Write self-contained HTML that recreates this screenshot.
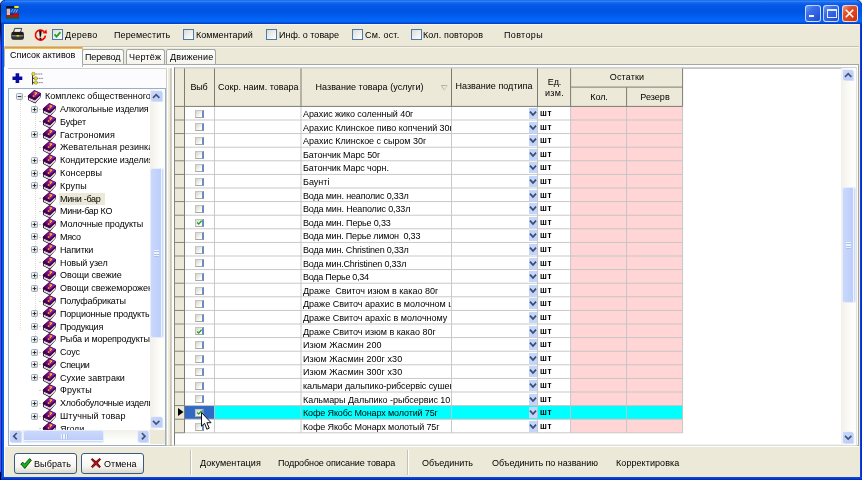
<!DOCTYPE html>
<html><head><meta charset="utf-8"><title>Список активов</title>
<style>
html,body{margin:0;padding:0;}
body{width:862px;height:480px;overflow:hidden;background:#ece9d8;position:relative;font-family:"Liberation Sans",sans-serif;font-size:9px;color:#000;}
span{will-change:transform;}
div,span{position:absolute;box-sizing:border-box;white-space:pre;}
svg{position:absolute;overflow:visible;}
.t{line-height:12px;height:12px;}
.cb{width:11px;height:11px;border:1.1px solid #4a7aad;background:linear-gradient(135deg,#dcdcd7,#fff);}
.tab{top:48.6px;height:15.5px;border:1px solid #a0a8a8;border-bottom:none;border-radius:2.5px 2.5px 0 0;background:linear-gradient(#fefefd,#f4f3ec);}
.gc{width:8.8px;height:8px;left:195.1px;background:linear-gradient(135deg,#d4d4cc,#fff 80%);border-right:2px solid #6c8cc0;border-bottom:1px solid #a8a8a0;border-left:1px solid #c4c4bc;border-top:1px solid #c4c4bc;}
.dd{left:529px;width:8px;height:11px;background:#c3d5fb;}
.btn{top:453px;height:20.6px;border:1.2px solid #3a5a84;border-radius:3px;background:linear-gradient(#fff,#f6f5f0 65%,#dcdacc);}
</style></head><body>
<svg width="0" height="0" style="left:0;top:0">
<defs>
<linearGradient id="xg" x1="0" y1="0" x2="1" y2="1"><stop offset="0" stop-color="#fff"/><stop offset="1" stop-color="#d4d0c4"/></linearGradient>
<symbol id="bk" viewBox="0 0 13 13.5">
<linearGradient id="bg1" x1="0" y1="0.6" x2="1" y2="0.3"><stop offset="0" stop-color="#3c0048"/><stop offset="0.4" stop-color="#86088f"/><stop offset="1" stop-color="#ac20bc"/></linearGradient>
<path d="M6.3 0 L12.8 3.1 L13 6.8 L7.1 13.4 L0.2 10.1 L0 5.6 Z" fill="#1c0024"/>
<path d="M0.9 7.7 L6.9 10.5 L12.4 5.2 L12.5 7 L7 12.4 L1 9.7 Z" fill="#fff"/>
<path d="M1 8.7 L7 11.5 L12.5 6.1" stroke="#888" stroke-width=".45" fill="none"/>
<path d="M0.4 6 L6.8 8.9 L12.3 3.8 L12.3 4.8 L6.8 10 L0.5 7.2Z" fill="#5c0a6a"/>
<path d="M0.5 5.6 L6.4 0.6 L12.2 3.3 L6.8 8.3 Z" fill="url(#bg1)"/>
<path d="M5.9 2.9 Q7.3 1.6 9 2.6 Q9.8 3.6 7.8 4.8 L7.2 5.4 L6.2 4.9 L7.6 3.7 Q7.5 3 6.8 3.5 Z" fill="#ffd800"/>
<circle cx="5.6" cy="6" r="0.85" fill="#ffd800"/>
</symbol>
<symbol id="ck" viewBox="0 0 9 9"><path d="M1.6 4.4 L3.6 6.6 L7.4 2.2" fill="none" stroke="#21a121" stroke-width="1.8"/></symbol>
<symbol id="chv" viewBox="0 0 8 11"><path d="M1 3.7 L4 7 L7 3.7" fill="none" stroke="#3a4c74" stroke-width="1.8"/></symbol>
</defs></svg>

<div style="left:0;top:0;width:862px;height:23.7px;background:linear-gradient(#1c5fe0 0,#3088fa 1.2px,#1468f2 2.6px,#0558e6 5px,#0054e3 12px,#0260f0 17px,#0468fa 21px,#0558ea 22.3px,#0340c4 23.7px);"></div>
<div style="left:4.6px;top:23.7px;width:854.4px;height:1.2px;background:#f6f4e8"></div>
<div style="left:0;top:24px;width:4px;height:456px;background:linear-gradient(90deg,#4858c8 0,#4858c8 0.8px,#0a20d0 1px,#0a20d0 2px,#0a58e8 2.4px,#0a58e8 4px);"></div>
<div style="left:4px;top:24px;width:0.6px;height:452px;background:#fff"></div>
<div style="left:0;top:2.5px;width:1px;height:44px;background:linear-gradient(#0c1428 0,#0c1428 28px,#4858c8 44px)"></div>
<div style="left:0;top:472px;width:1px;height:8px;background:#080810"></div>
<div style="left:859.5px;top:23.7px;width:2.5px;height:456.3px;background:linear-gradient(90deg,#0a48e4,#0830cc 1.3px,#0020b0 2.5px);"></div>
<div style="left:1px;top:476.6px;width:861px;height:3.4px;background:linear-gradient(#0a50e4,#0838d0 1.6px,#0020a8 3.4px);"></div>
<svg style="left:0;top:0" width="5" height="5"><path d="M0 0 H5 A5 5 0 0 0 0 5 Z" fill="#f0f0f0"/><path d="M5 0.5 A4.5 4.5 0 0 0 0.5 5" fill="none" stroke="#183890" stroke-width="1"/></svg>
<svg style="left:857px;top:0" width="5" height="5"><path d="M5 0 H0 A5 5 0 0 1 5 5 Z" fill="#f0f0f0"/><path d="M0 0.5 A4.5 4.5 0 0 1 4.5 5" fill="none" stroke="#183890" stroke-width="1"/></svg>
<svg style="left:6px;top:6px" width="13" height="12.8" viewBox="0 0 13 12.8"><rect width="13" height="12.8" fill="#1a2a6a"/><rect x="0.5" y="0.3" width="12" height="2.2" fill="#10102a"/><rect x="8.3" y="0" width="4.4" height="2.1" fill="#f4ec10"/><rect x="4" y="2.5" width="8.7" height="5" fill="#1c50d0"/><path d="M5 6 L7 3 M7.5 6.5 L9.5 3 M10 6.5 L11.5 3.5" stroke="#58c8f8" stroke-width="0.9"/><rect x="0.7" y="2.7" width="3.3" height="6.4" fill="#c8c8c0"/><rect x="1.6" y="4" width="1.2" height="3" fill="#e8b0c0"/><rect x="7.3" y="7.3" width="5.4" height="2" fill="#c80808"/><rect x="0.4" y="9" width="12.3" height="2.6" fill="#c01010"/><rect x="0.2" y="11.4" width="12.6" height="1.4" fill="#107810"/></svg>
<div style="left:804.5px;top:5px;width:16px;height:16.5px;border:1px solid rgba(255,255,255,0.75);border-radius:3px;background:linear-gradient(135deg,#6c9af6 0,#3c6eea 32%,#2c5ce0 68%,#2248c8 100%)"></div>
<div style="left:823px;top:5px;width:16px;height:16.5px;border:1px solid rgba(255,255,255,0.75);border-radius:3px;background:linear-gradient(135deg,#6c9af6 0,#3c6eea 32%,#2c5ce0 68%,#2248c8 100%)"></div>
<div style="left:841.5px;top:5px;width:16px;height:16.5px;border:1px solid rgba(255,255,255,0.75);border-radius:3px;background:linear-gradient(135deg,#f0a088 0,#e0532e 30%,#d84018 70%,#c03010 100%)"></div>
<div style="left:808.5px;top:15px;width:5.6px;height:2.4px;background:#f4f6ff"></div>
<div style="left:827px;top:8.5px;width:9.6px;height:9px;border:1px solid #e4ecff;border-top:2.4px solid #e4ecff"></div>
<svg style="left:845px;top:8.5px" width="9" height="9" viewBox="0 0 9 9"><path d="M0.8 0.8 L8.2 8.2 M8.2 0.8 L0.8 8.2" stroke="#fff" stroke-width="1.6"/></svg>
<div style="left:4px;top:45.7px;width:855px;height:1px;background:#c5c2b0"></div><div style="left:4px;top:46.7px;width:855px;height:1px;background:#f6f5ee"></div>
<svg style="left:11px;top:28px" width="13.2" height="12" viewBox="0 0 13.2 12"><path d="M3.6 0.4 h7.2 l-1.4 4 h-7z" fill="#c8c8c8" stroke="#333" stroke-width="0.9"/><path d="M0.3 6 Q0.3 3.8 2.4 3.8 H10.8 Q12.9 3.8 12.9 6 V9.6 Q12.9 11.8 10.6 11.8 H2.6 Q0.3 11.8 0.3 9.6Z" fill="#1c1c1c"/><path d="M4.4 1.2 h5.4 l-0.9 2.6 h-5.2z" fill="#f0f0f0"/><rect x="1" y="7.3" width="11.2" height="1.1" fill="#a8a8a0"/><rect x="5.6" y="7" width="2.6" height="1.6" fill="#d8d000"/><rect x="1.6" y="9.6" width="10" height="0.7" fill="#666"/></svg>
<svg style="left:34px;top:29px" width="13.2" height="12.6" viewBox="0 0 13.2 12.6"><path d="M10 2.6 A5 5 0 1 0 11.4 6.6" fill="none" stroke="#f80000" stroke-width="1.7"/><path d="M8.4 4.2 L13 4.6 L12.4 0.6 Z" fill="#f80000"/><path d="M5.1 1.8 h2.6 l-0.7 6 h-1.2z" fill="#0a0a0a"/><rect x="5.5" y="8.7" width="1.8" height="1.9" fill="#0a0a0a"/></svg>
<div class="cb" style="left:52px;top:29px"></div>
<svg style="left:53px;top:30px" width="9" height="9"><use href="#ck"/></svg>
<span class="t" style="left:65px;top:28.5px;letter-spacing:0.301px;">Дерево</span>
<span class="t" style="left:113.5px;top:29.2px;letter-spacing:0.116px;">Переместить</span>
<div class="cb" style="left:182.5px;top:29px"></div>
<span class="t" style="left:196px;top:28.5px;">Комментарий</span>
<div class="cb" style="left:265.5px;top:29px"></div>
<span class="t" style="left:278.5px;top:28.5px;">Инф. о товаре</span>
<div class="cb" style="left:352px;top:29px"></div>
<span class="t" style="left:365px;top:28.5px;letter-spacing:0.196px;">См. ост.</span>
<div class="cb" style="left:410.5px;top:29px"></div>
<span class="t" style="left:423px;top:28.5px;letter-spacing:0.117px;">Кол. повторов</span>
<span class="t" style="left:503.5px;top:29.2px;letter-spacing:0.35px;">Повторы</span>
<div style="left:4px;top:64px;width:854.5px;height:382px;background:#fcfcfe;border:1px solid #a4a8a4;border-left:none"></div>
<div style="left:166.5px;top:68px;width:7px;height:377px;background:#ece9d8"></div>
<svg style="left:0;top:0" width="10" height="480" viewBox="0 0 10 480"><rect x="4.05" y="66" width="0.6" height="380" fill="#8c8c8c"/></svg>
<div style="left:4px;top:66px;width:162px;height:380px;background:#fcfcfe"></div>
<div style="left:4px;top:46.5px;width:78.5px;height:20px;background:#fcfcfe;border:1px solid #b4b8b4;border-bottom:none;border-radius:2px 2px 0 0"></div>
<div style="left:4px;top:46.5px;width:78.5px;height:2.5px;background:linear-gradient(#e68b2c,#ffc73c);border-radius:2px 2px 0 0"></div>
<span class="t" style="left:10px;top:49px;letter-spacing:0.022px;">Список активов</span>
<div class="tab" style="left:82.3px;width:42px"></div>
<span class="t" style="left:84.8px;top:50.6px;letter-spacing:-0.139px;">Перевод</span>
<div class="tab" style="left:125.8px;width:39.2px"></div>
<span class="t" style="left:129px;top:50.6px;letter-spacing:0.206px;">Чертёж</span>
<div class="tab" style="left:166.4px;width:49.3px"></div>
<span class="t" style="left:169.7px;top:50.6px;letter-spacing:0.18px;">Движение</span>
<div style="left:8px;top:68px;width:158px;height:1px;background:#d0d0c8"></div>
<svg style="left:12.2px;top:72.8px" width="10.8" height="10.4" viewBox="0 0 11 11"><path d="M3.6 0.3 h3.8 v3.3 h3.3 v3.8 h-3.3 v3.3 h-3.8 v-3.3 h-3.3 v-3.8 h3.3z" fill="#0a0aa0"/></svg>
<svg style="left:30.5px;top:71.8px" width="13" height="13" viewBox="0 0 13 13"><path d="M1.6 1 V12.6" stroke="#222" stroke-width="1"/><path d="M3 2 H12 M6 6.4 H12 M6 10.6 H12" stroke="#555" stroke-width="0.9" stroke-dasharray="1.3 0.9"/><circle cx="2.4" cy="1.9" r="1.7" fill="#f4e400" stroke="#665" stroke-width="0.5"/><circle cx="4.8" cy="6.4" r="1.7" fill="#f4e400" stroke="#665" stroke-width="0.5"/><circle cx="4.8" cy="10.6" r="1.7" fill="#f4e400" stroke="#665" stroke-width="0.5"/><path d="M1.6 6.4 H3.2 M1.6 10.6 H3.2" stroke="#222" stroke-width="0.8"/></svg>
<div style="left:8px;top:87.5px;width:158px;height:358px;border:1px solid #98afc6;background:#fff;overflow:hidden">
<div style="left:11px;top:11.5px;width:0;height:230px;border-left:1px dotted #e4e0d6"></div>
<div style="left:26px;top:11.5px;width:0;height:240px;border-left:1px dotted #dcd8cc"></div>
<div style="left:14.5px;top:7.39px;width:4.5px;height:0;border-top:1px dotted #d4d0c4"></div>
<svg style="left:7.1px;top:4.29px" width="7" height="7" viewBox="0 0 7 7"><rect x="0.5" y="0.5" width="6" height="6" rx="1" fill="url(#xg)" stroke="#8aa4c0" stroke-width="0.9"/><path d="M1.7 3.5 H5.3" stroke="#222" stroke-width="0.9"/></svg>
<svg style="left:19.3px;top:1.4px" width="13" height="13.5"><use href="#bk"/></svg>
<span class="t" style="left:35px;top:1.8px;padding:0 1px;letter-spacing:-0.03px;">Комплекс общественного питания</span>
<div style="left:29.5px;top:20.18px;width:4px;height:0;border-top:1px dotted #d4d0c4"></div>
<svg style="left:22.1px;top:17.08px" width="7" height="7" viewBox="0 0 7 7"><rect x="0.5" y="0.5" width="6" height="6" rx="1" fill="url(#xg)" stroke="#8aa4c0" stroke-width="0.9"/><path d="M1.7 3.5 H5.3" stroke="#222" stroke-width="0.9"/><path d="M3.5 1.7 V5.3" stroke="#222" stroke-width="0.9"/></svg>
<svg style="left:33.8px;top:14.19px" width="13" height="13.5"><use href="#bk"/></svg>
<span class="t" style="left:49.5px;top:14.59px;padding:0 1px;letter-spacing:-0.136px;">Алкогольные изделия</span>
<div style="left:29.5px;top:32.97px;width:4px;height:0;border-top:1px dotted #d4d0c4"></div>
<svg style="left:33.8px;top:26.98px" width="13" height="13.5"><use href="#bk"/></svg>
<span class="t" style="left:49.5px;top:27.38px;padding:0 1px;letter-spacing:-0.061px;">Буфет</span>
<div style="left:29.5px;top:45.77px;width:4px;height:0;border-top:1px dotted #d4d0c4"></div>
<svg style="left:22.1px;top:42.66px" width="7" height="7" viewBox="0 0 7 7"><rect x="0.5" y="0.5" width="6" height="6" rx="1" fill="url(#xg)" stroke="#8aa4c0" stroke-width="0.9"/><path d="M1.7 3.5 H5.3" stroke="#222" stroke-width="0.9"/><path d="M3.5 1.7 V5.3" stroke="#222" stroke-width="0.9"/></svg>
<svg style="left:33.8px;top:39.77px" width="13" height="13.5"><use href="#bk"/></svg>
<span class="t" style="left:49.5px;top:40.17px;padding:0 1px;letter-spacing:0.072px;">Гастрономия</span>
<div style="left:29.5px;top:58.55px;width:4px;height:0;border-top:1px dotted #d4d0c4"></div>
<svg style="left:33.8px;top:52.56px" width="13" height="13.5"><use href="#bk"/></svg>
<span class="t" style="left:49.5px;top:52.96px;padding:0 1px;letter-spacing:0.083px;">Жевательная резинка</span>
<div style="left:29.5px;top:71.34px;width:4px;height:0;border-top:1px dotted #d4d0c4"></div>
<svg style="left:22.1px;top:68.24px" width="7" height="7" viewBox="0 0 7 7"><rect x="0.5" y="0.5" width="6" height="6" rx="1" fill="url(#xg)" stroke="#8aa4c0" stroke-width="0.9"/><path d="M1.7 3.5 H5.3" stroke="#222" stroke-width="0.9"/><path d="M3.5 1.7 V5.3" stroke="#222" stroke-width="0.9"/></svg>
<svg style="left:33.8px;top:65.35px" width="13" height="13.5"><use href="#bk"/></svg>
<span class="t" style="left:49.5px;top:65.75px;padding:0 1px;letter-spacing:-0.056px;">Кондитерские изделия</span>
<div style="left:29.5px;top:84.14px;width:4px;height:0;border-top:1px dotted #d4d0c4"></div>
<svg style="left:22.1px;top:81.04px" width="7" height="7" viewBox="0 0 7 7"><rect x="0.5" y="0.5" width="6" height="6" rx="1" fill="url(#xg)" stroke="#8aa4c0" stroke-width="0.9"/><path d="M1.7 3.5 H5.3" stroke="#222" stroke-width="0.9"/><path d="M3.5 1.7 V5.3" stroke="#222" stroke-width="0.9"/></svg>
<svg style="left:33.8px;top:78.14px" width="13" height="13.5"><use href="#bk"/></svg>
<span class="t" style="left:49.5px;top:78.54px;padding:0 1px;letter-spacing:0.145px;">Консервы</span>
<div style="left:29.5px;top:96.92px;width:4px;height:0;border-top:1px dotted #d4d0c4"></div>
<svg style="left:22.1px;top:93.83px" width="7" height="7" viewBox="0 0 7 7"><rect x="0.5" y="0.5" width="6" height="6" rx="1" fill="url(#xg)" stroke="#8aa4c0" stroke-width="0.9"/><path d="M1.7 3.5 H5.3" stroke="#222" stroke-width="0.9"/><path d="M3.5 1.7 V5.3" stroke="#222" stroke-width="0.9"/></svg>
<svg style="left:33.8px;top:90.93px" width="13" height="13.5"><use href="#bk"/></svg>
<span class="t" style="left:49.5px;top:91.33px;padding:0 1px;letter-spacing:0.2px;">Крупы</span>
<div style="left:29.5px;top:109.71px;width:4px;height:0;border-top:1px dotted #d4d0c4"></div>
<svg style="left:33.8px;top:103.72px" width="13" height="13.5"><use href="#bk"/></svg>
<span class="t" style="left:49.5px;top:104.12px;padding:0 1px; background:#ece9d8;padding-right:4.5px;letter-spacing:-0.273px;">Мини -бар</span>
<div style="left:29.5px;top:122.5px;width:4px;height:0;border-top:1px dotted #d4d0c4"></div>
<svg style="left:33.8px;top:116.51px" width="13" height="13.5"><use href="#bk"/></svg>
<span class="t" style="left:49.5px;top:116.91px;padding:0 1px;letter-spacing:-0.273px;">Мини-бар КО</span>
<div style="left:29.5px;top:135.29px;width:4px;height:0;border-top:1px dotted #d4d0c4"></div>
<svg style="left:22.1px;top:132.19px" width="7" height="7" viewBox="0 0 7 7"><rect x="0.5" y="0.5" width="6" height="6" rx="1" fill="url(#xg)" stroke="#8aa4c0" stroke-width="0.9"/><path d="M1.7 3.5 H5.3" stroke="#222" stroke-width="0.9"/><path d="M3.5 1.7 V5.3" stroke="#222" stroke-width="0.9"/></svg>
<svg style="left:33.8px;top:129.3px" width="13" height="13.5"><use href="#bk"/></svg>
<span class="t" style="left:49.5px;top:129.7px;padding:0 1px;letter-spacing:-0.124px;">Молочные продукты</span>
<div style="left:29.5px;top:148.09px;width:4px;height:0;border-top:1px dotted #d4d0c4"></div>
<svg style="left:22.1px;top:144.99px" width="7" height="7" viewBox="0 0 7 7"><rect x="0.5" y="0.5" width="6" height="6" rx="1" fill="url(#xg)" stroke="#8aa4c0" stroke-width="0.9"/><path d="M1.7 3.5 H5.3" stroke="#222" stroke-width="0.9"/><path d="M3.5 1.7 V5.3" stroke="#222" stroke-width="0.9"/></svg>
<svg style="left:33.8px;top:142.09px" width="13" height="13.5"><use href="#bk"/></svg>
<span class="t" style="left:49.5px;top:142.49px;padding:0 1px;letter-spacing:-0.35px;">Мясо</span>
<div style="left:29.5px;top:160.88px;width:4px;height:0;border-top:1px dotted #d4d0c4"></div>
<svg style="left:22.1px;top:157.78px" width="7" height="7" viewBox="0 0 7 7"><rect x="0.5" y="0.5" width="6" height="6" rx="1" fill="url(#xg)" stroke="#8aa4c0" stroke-width="0.9"/><path d="M1.7 3.5 H5.3" stroke="#222" stroke-width="0.9"/><path d="M3.5 1.7 V5.3" stroke="#222" stroke-width="0.9"/></svg>
<svg style="left:33.8px;top:154.88px" width="13" height="13.5"><use href="#bk"/></svg>
<span class="t" style="left:49.5px;top:155.28px;padding:0 1px;letter-spacing:-0.183px;">Напитки</span>
<div style="left:29.5px;top:173.66px;width:4px;height:0;border-top:1px dotted #d4d0c4"></div>
<svg style="left:33.8px;top:167.67px" width="13" height="13.5"><use href="#bk"/></svg>
<span class="t" style="left:49.5px;top:168.07px;padding:0 1px;letter-spacing:-0.12px;">Новый узел</span>
<div style="left:29.5px;top:186.46px;width:4px;height:0;border-top:1px dotted #d4d0c4"></div>
<svg style="left:22.1px;top:183.36px" width="7" height="7" viewBox="0 0 7 7"><rect x="0.5" y="0.5" width="6" height="6" rx="1" fill="url(#xg)" stroke="#8aa4c0" stroke-width="0.9"/><path d="M1.7 3.5 H5.3" stroke="#222" stroke-width="0.9"/><path d="M3.5 1.7 V5.3" stroke="#222" stroke-width="0.9"/></svg>
<svg style="left:33.8px;top:180.46px" width="13" height="13.5"><use href="#bk"/></svg>
<span class="t" style="left:49.5px;top:180.86px;padding:0 1px;">Овощи свежие</span>
<div style="left:29.5px;top:199.25px;width:4px;height:0;border-top:1px dotted #d4d0c4"></div>
<svg style="left:22.1px;top:196.15px" width="7" height="7" viewBox="0 0 7 7"><rect x="0.5" y="0.5" width="6" height="6" rx="1" fill="url(#xg)" stroke="#8aa4c0" stroke-width="0.9"/><path d="M1.7 3.5 H5.3" stroke="#222" stroke-width="0.9"/><path d="M3.5 1.7 V5.3" stroke="#222" stroke-width="0.9"/></svg>
<svg style="left:33.8px;top:193.25px" width="13" height="13.5"><use href="#bk"/></svg>
<span class="t" style="left:49.5px;top:193.65px;padding:0 1px;letter-spacing:-0.054px;">Овощи свежемороженые</span>
<div style="left:29.5px;top:212.03px;width:4px;height:0;border-top:1px dotted #d4d0c4"></div>
<svg style="left:33.8px;top:206.04px" width="13" height="13.5"><use href="#bk"/></svg>
<span class="t" style="left:49.5px;top:206.44px;padding:0 1px;letter-spacing:-0.18px;">Полуфабрикаты</span>
<div style="left:29.5px;top:224.82px;width:4px;height:0;border-top:1px dotted #d4d0c4"></div>
<svg style="left:22.1px;top:221.72px" width="7" height="7" viewBox="0 0 7 7"><rect x="0.5" y="0.5" width="6" height="6" rx="1" fill="url(#xg)" stroke="#8aa4c0" stroke-width="0.9"/><path d="M1.7 3.5 H5.3" stroke="#222" stroke-width="0.9"/><path d="M3.5 1.7 V5.3" stroke="#222" stroke-width="0.9"/></svg>
<svg style="left:33.8px;top:218.83px" width="13" height="13.5"><use href="#bk"/></svg>
<span class="t" style="left:49.5px;top:219.23px;padding:0 1px;letter-spacing:-0.182px;">Порционные продукты</span>
<div style="left:29.5px;top:237.61px;width:4px;height:0;border-top:1px dotted #d4d0c4"></div>
<svg style="left:22.1px;top:234.51px" width="7" height="7" viewBox="0 0 7 7"><rect x="0.5" y="0.5" width="6" height="6" rx="1" fill="url(#xg)" stroke="#8aa4c0" stroke-width="0.9"/><path d="M1.7 3.5 H5.3" stroke="#222" stroke-width="0.9"/><path d="M3.5 1.7 V5.3" stroke="#222" stroke-width="0.9"/></svg>
<svg style="left:33.8px;top:231.62px" width="13" height="13.5"><use href="#bk"/></svg>
<span class="t" style="left:49.5px;top:232.02px;padding:0 1px;letter-spacing:-0.216px;">Продукция</span>
<div style="left:29.5px;top:250.41px;width:4px;height:0;border-top:1px dotted #d4d0c4"></div>
<svg style="left:22.1px;top:247.31px" width="7" height="7" viewBox="0 0 7 7"><rect x="0.5" y="0.5" width="6" height="6" rx="1" fill="url(#xg)" stroke="#8aa4c0" stroke-width="0.9"/><path d="M1.7 3.5 H5.3" stroke="#222" stroke-width="0.9"/><path d="M3.5 1.7 V5.3" stroke="#222" stroke-width="0.9"/></svg>
<svg style="left:33.8px;top:244.41px" width="13" height="13.5"><use href="#bk"/></svg>
<span class="t" style="left:49.5px;top:244.81px;padding:0 1px;letter-spacing:-0.152px;">Рыба и морепродукты</span>
<div style="left:29.5px;top:263.19px;width:4px;height:0;border-top:1px dotted #d4d0c4"></div>
<svg style="left:22.1px;top:260.09px" width="7" height="7" viewBox="0 0 7 7"><rect x="0.5" y="0.5" width="6" height="6" rx="1" fill="url(#xg)" stroke="#8aa4c0" stroke-width="0.9"/><path d="M1.7 3.5 H5.3" stroke="#222" stroke-width="0.9"/><path d="M3.5 1.7 V5.3" stroke="#222" stroke-width="0.9"/></svg>
<svg style="left:33.8px;top:257.2px" width="13" height="13.5"><use href="#bk"/></svg>
<span class="t" style="left:49.5px;top:257.6px;padding:0 1px;letter-spacing:-0.138px;">Соус</span>
<div style="left:29.5px;top:275.98px;width:4px;height:0;border-top:1px dotted #d4d0c4"></div>
<svg style="left:22.1px;top:272.88px" width="7" height="7" viewBox="0 0 7 7"><rect x="0.5" y="0.5" width="6" height="6" rx="1" fill="url(#xg)" stroke="#8aa4c0" stroke-width="0.9"/><path d="M1.7 3.5 H5.3" stroke="#222" stroke-width="0.9"/><path d="M3.5 1.7 V5.3" stroke="#222" stroke-width="0.9"/></svg>
<svg style="left:33.8px;top:269.99px" width="13" height="13.5"><use href="#bk"/></svg>
<span class="t" style="left:49.5px;top:270.39px;padding:0 1px;letter-spacing:-0.35px;">Специи</span>
<div style="left:29.5px;top:288.77px;width:4px;height:0;border-top:1px dotted #d4d0c4"></div>
<svg style="left:22.1px;top:285.67px" width="7" height="7" viewBox="0 0 7 7"><rect x="0.5" y="0.5" width="6" height="6" rx="1" fill="url(#xg)" stroke="#8aa4c0" stroke-width="0.9"/><path d="M1.7 3.5 H5.3" stroke="#222" stroke-width="0.9"/><path d="M3.5 1.7 V5.3" stroke="#222" stroke-width="0.9"/></svg>
<svg style="left:33.8px;top:282.78px" width="13" height="13.5"><use href="#bk"/></svg>
<span class="t" style="left:49.5px;top:283.18px;padding:0 1px;">Сухие завтраки</span>
<div style="left:29.5px;top:301.56px;width:4px;height:0;border-top:1px dotted #d4d0c4"></div>
<svg style="left:33.8px;top:295.57px" width="13" height="13.5"><use href="#bk"/></svg>
<span class="t" style="left:49.5px;top:295.97px;padding:0 1px;letter-spacing:0.162px;">Фрукты</span>
<div style="left:29.5px;top:314.35px;width:4px;height:0;border-top:1px dotted #d4d0c4"></div>
<svg style="left:22.1px;top:311.25px" width="7" height="7" viewBox="0 0 7 7"><rect x="0.5" y="0.5" width="6" height="6" rx="1" fill="url(#xg)" stroke="#8aa4c0" stroke-width="0.9"/><path d="M1.7 3.5 H5.3" stroke="#222" stroke-width="0.9"/><path d="M3.5 1.7 V5.3" stroke="#222" stroke-width="0.9"/></svg>
<svg style="left:33.8px;top:308.36px" width="13" height="13.5"><use href="#bk"/></svg>
<span class="t" style="left:49.5px;top:308.76px;padding:0 1px;letter-spacing:-0.281px;">Хлобобулочные изделия</span>
<div style="left:29.5px;top:327.14px;width:4px;height:0;border-top:1px dotted #d4d0c4"></div>
<svg style="left:22.1px;top:324.04px" width="7" height="7" viewBox="0 0 7 7"><rect x="0.5" y="0.5" width="6" height="6" rx="1" fill="url(#xg)" stroke="#8aa4c0" stroke-width="0.9"/><path d="M1.7 3.5 H5.3" stroke="#222" stroke-width="0.9"/><path d="M3.5 1.7 V5.3" stroke="#222" stroke-width="0.9"/></svg>
<svg style="left:33.8px;top:321.15px" width="13" height="13.5"><use href="#bk"/></svg>
<span class="t" style="left:49.5px;top:321.55px;padding:0 1px;letter-spacing:0.087px;">Штучный товар</span>
<div style="left:29.5px;top:339.93px;width:4px;height:0;border-top:1px dotted #d4d0c4"></div>
<svg style="left:33.8px;top:333.94px" width="13" height="13.5"><use href="#bk"/></svg>
<span class="t" style="left:49.5px;top:334.34px;padding:0 1px;letter-spacing:-0.093px;">Ягоди</span>
<div style="left:141.2px;top:0.5px;width:14.6px;height:341.5px;background:linear-gradient(90deg,#f2f0ea,#fdfdfa 70%)"></div>
<div style="left:142.2px;top:2.1px;width:10.4px;height:10.4px;background:linear-gradient(135deg,#cad8fd,#b9cbf8);border-radius:1px;box-shadow:1.1px 1.1px 0.6px #d4dff9,-0.5px -0.5px 0.5px #e8eefc"></div>
<svg style="left:142.2px;top:2.1px" width="10.4" height="10.4" viewBox="0 0 10.4 10.4"><path d="M2 6.8 L5.2 3.7 L8.4 6.8" fill="none" stroke="#445474" stroke-width="1.7"/></svg>
<div style="left:141.8px;top:80.1px;width:12.2px;height:168.4px;background:linear-gradient(90deg,#cbd8fd 0,#bccef9 80%,#eef3ff 86%,#eef3ff 92%,#a9bbe6 100%);border-radius:1.5px;box-shadow:0 0 0.8px 0.3px #e6ecfc"></div>
<div style="left:145.1px;top:161.3px;width:4.8px;height:0.8px;background:#eef4fe;box-shadow:0 0.6px 0 #9fb4e6"></div>
<div style="left:145.1px;top:163px;width:4.8px;height:0.8px;background:#eef4fe;box-shadow:0 0.6px 0 #9fb4e6"></div>
<div style="left:145.1px;top:164.7px;width:4.8px;height:0.8px;background:#eef4fe;box-shadow:0 0.6px 0 #9fb4e6"></div>
<div style="left:145.1px;top:166.4px;width:4.8px;height:0.8px;background:#eef4fe;box-shadow:0 0.6px 0 #9fb4e6"></div>
<div style="left:142.2px;top:328.5px;width:10.4px;height:10.4px;background:linear-gradient(135deg,#cad8fd,#b9cbf8);border-radius:1px;box-shadow:1.1px 1.1px 0.6px #d4dff9,-0.5px -0.5px 0.5px #e8eefc"></div>
<svg style="left:142.2px;top:328.5px" width="10.4" height="10.4" viewBox="0 0 10.4 10.4"><path d="M2 3.9 L5.2 7 L8.4 3.9" fill="none" stroke="#445474" stroke-width="1.7"/></svg>
<div style="left:0;top:341.7px;width:141.2px;height:14px;background:linear-gradient(#f2f0ea,#fdfdfa 70%)"></div>
<div style="left:1.3px;top:342.7px;width:10.4px;height:10.4px;background:linear-gradient(135deg,#cad8fd,#b9cbf8);border-radius:1px;box-shadow:1.1px 1.1px 0.6px #d4dff9,-0.5px -0.5px 0.5px #e8eefc"></div>
<svg style="left:1.3px;top:342.7px" width="10.4" height="10.4" viewBox="0 0 10.4 10.4"><path d="M6.8 2 L3.7 5.2 L6.8 8.4" fill="none" stroke="#445474" stroke-width="1.7"/></svg>
<div style="left:15.4px;top:342.4px;width:78.8px;height:11.6px;background:linear-gradient(180deg,#cbd8fd 0,#bccef9 80%,#eef3ff 86%,#eef3ff 92%,#a9bbe6 100%);border-radius:1.5px;box-shadow:0 0 0.8px 0.3px #e6ecfc"></div>
<div style="left:51.8px;top:345.4px;width:0.8px;height:4.8px;background:#eef4fe;box-shadow:0.6px 0 0 #9fb4e6"></div>
<div style="left:53.5px;top:345.4px;width:0.8px;height:4.8px;background:#eef4fe;box-shadow:0.6px 0 0 #9fb4e6"></div>
<div style="left:55.2px;top:345.4px;width:0.8px;height:4.8px;background:#eef4fe;box-shadow:0.6px 0 0 #9fb4e6"></div>
<div style="left:56.9px;top:345.4px;width:0.8px;height:4.8px;background:#eef4fe;box-shadow:0.6px 0 0 #9fb4e6"></div>
<div style="left:128.5px;top:342.7px;width:10.4px;height:10.4px;background:linear-gradient(135deg,#cad8fd,#b9cbf8);border-radius:1px;box-shadow:1.1px 1.1px 0.6px #d4dff9,-0.5px -0.5px 0.5px #e8eefc"></div>
<svg style="left:128.5px;top:342.7px" width="10.4" height="10.4" viewBox="0 0 10.4 10.4"><path d="M3.9 2 L7 5.2 L3.9 8.4" fill="none" stroke="#445474" stroke-width="1.7"/></svg>
<div style="left:141.2px;top:341.7px;width:14.6px;height:14px;background:#ece9d8"></div>
</div>
<svg style="left:160px;top:60px" width="20" height="390" viewBox="160 60 20 390"><rect x="166" y="68" width="0.8" height="377.5" fill="#b4b4ac"/><rect x="166.8" y="68" width="1.7" height="377.5" fill="#fcfcfa"/><rect x="168.5" y="68" width="2" height="377.5" fill="#ece9d8"/><rect x="170.5" y="68" width="1.2" height="377.5" fill="#aca89c"/><rect x="171.7" y="68" width="2.4" height="377.5" fill="#fff"/></svg>
<div style="left:174.0px;top:67.6px;width:682.5px;height:378.0px;background:#fff;"></div>
<svg style="left:0;top:0" width="862" height="480" viewBox="0 0 862 480"><rect x="174.0" y="67.6" width="682.5" height="0.9" fill="#8c8c84"/><rect x="174.0" y="67.6" width="0.9" height="378.0" fill="#6c6c64"/><rect x="174.0" y="444.8" width="682.5" height="0.8" fill="#c4c4bc"/><rect x="855.7" y="67.6" width="0.8" height="378.0" fill="#c4c4bc"/><rect x="174.9" y="68.4" width="507.70000000000005" height="38.0" fill="#ece9d8"/><rect x="174.9" y="106.4" width="9.599999999999994" height="326.4" fill="#ece9d8"/><rect x="570.6" y="106.4" width="112.0" height="326.4" fill="#ffd5d5"/><rect x="214.5" y="405.6" width="468.1" height="13.6" fill="#00ffff"/><rect x="184.5" y="405.6" width="30" height="13.6" fill="#316ac5"/><rect x="184.5" y="119.55" width="498.1" height="0.9" fill="#c4c4c4"/><rect x="174.9" y="119.55" width="9.6" height="0.9" fill="#7c7c74"/><rect x="184.5" y="133.15" width="498.1" height="0.9" fill="#c4c4c4"/><rect x="174.9" y="133.15" width="9.6" height="0.9" fill="#7c7c74"/><rect x="184.5" y="146.75" width="498.1" height="0.9" fill="#c4c4c4"/><rect x="174.9" y="146.75" width="9.6" height="0.9" fill="#7c7c74"/><rect x="184.5" y="160.35" width="498.1" height="0.9" fill="#c4c4c4"/><rect x="174.9" y="160.35" width="9.6" height="0.9" fill="#7c7c74"/><rect x="184.5" y="173.95" width="498.1" height="0.9" fill="#c4c4c4"/><rect x="174.9" y="173.95" width="9.6" height="0.9" fill="#7c7c74"/><rect x="184.5" y="187.55" width="498.1" height="0.9" fill="#c4c4c4"/><rect x="174.9" y="187.55" width="9.6" height="0.9" fill="#7c7c74"/><rect x="184.5" y="201.15" width="498.1" height="0.9" fill="#c4c4c4"/><rect x="174.9" y="201.15" width="9.6" height="0.9" fill="#7c7c74"/><rect x="184.5" y="214.75" width="498.1" height="0.9" fill="#c4c4c4"/><rect x="174.9" y="214.75" width="9.6" height="0.9" fill="#7c7c74"/><rect x="184.5" y="228.35" width="498.1" height="0.9" fill="#c4c4c4"/><rect x="174.9" y="228.35" width="9.6" height="0.9" fill="#7c7c74"/><rect x="184.5" y="241.95" width="498.1" height="0.9" fill="#c4c4c4"/><rect x="174.9" y="241.95" width="9.6" height="0.9" fill="#7c7c74"/><rect x="184.5" y="255.55" width="498.1" height="0.9" fill="#c4c4c4"/><rect x="174.9" y="255.55" width="9.6" height="0.9" fill="#7c7c74"/><rect x="184.5" y="269.15" width="498.1" height="0.9" fill="#c4c4c4"/><rect x="174.9" y="269.15" width="9.6" height="0.9" fill="#7c7c74"/><rect x="184.5" y="282.75" width="498.1" height="0.9" fill="#c4c4c4"/><rect x="174.9" y="282.75" width="9.6" height="0.9" fill="#7c7c74"/><rect x="184.5" y="296.35" width="498.1" height="0.9" fill="#c4c4c4"/><rect x="174.9" y="296.35" width="9.6" height="0.9" fill="#7c7c74"/><rect x="184.5" y="309.95" width="498.1" height="0.9" fill="#c4c4c4"/><rect x="174.9" y="309.95" width="9.6" height="0.9" fill="#7c7c74"/><rect x="184.5" y="323.55" width="498.1" height="0.9" fill="#c4c4c4"/><rect x="174.9" y="323.55" width="9.6" height="0.9" fill="#7c7c74"/><rect x="184.5" y="337.15" width="498.1" height="0.9" fill="#c4c4c4"/><rect x="174.9" y="337.15" width="9.6" height="0.9" fill="#7c7c74"/><rect x="184.5" y="350.75" width="498.1" height="0.9" fill="#c4c4c4"/><rect x="174.9" y="350.75" width="9.6" height="0.9" fill="#7c7c74"/><rect x="184.5" y="364.35" width="498.1" height="0.9" fill="#c4c4c4"/><rect x="174.9" y="364.35" width="9.6" height="0.9" fill="#7c7c74"/><rect x="184.5" y="377.95" width="498.1" height="0.9" fill="#c4c4c4"/><rect x="174.9" y="377.95" width="9.6" height="0.9" fill="#7c7c74"/><rect x="184.5" y="391.55" width="498.1" height="0.9" fill="#c4c4c4"/><rect x="174.9" y="391.55" width="9.6" height="0.9" fill="#7c7c74"/><rect x="184.5" y="405.15" width="498.1" height="0.9" fill="#c4c4c4"/><rect x="174.9" y="405.15" width="9.6" height="0.9" fill="#7c7c74"/><rect x="184.5" y="418.75" width="498.1" height="0.9" fill="#c4c4c4"/><rect x="174.9" y="418.75" width="9.6" height="0.9" fill="#7c7c74"/><rect x="184.5" y="432.35" width="498.1" height="0.9" fill="#c4c4c4"/><rect x="174.9" y="432.35" width="9.6" height="0.9" fill="#7c7c74"/><rect x="214.05" y="106.4" width="0.9" height="326.4" fill="#c4c4c4"/><rect x="300.55" y="106.4" width="0.9" height="326.4" fill="#c4c4c4"/><rect x="451.05" y="106.4" width="0.9" height="326.4" fill="#c4c4c4"/><rect x="537.05" y="106.4" width="0.9" height="326.4" fill="#c4c4c4"/><rect x="570.15" y="106.4" width="0.9" height="326.4" fill="#c4c4c4"/><rect x="626.15" y="106.4" width="0.9" height="326.4" fill="#c4c4c4"/><rect x="682.15" y="106.4" width="0.9" height="326.4" fill="#c4c4c4"/><rect x="184.0" y="106.4" width="1" height="326.4" fill="#7c7c74"/><rect x="174.9" y="105.9" width="507.70000000000005" height="1" fill="#7c7c74"/><rect x="184" y="68.4" width="1" height="38" fill="#7c7c74"/><rect x="214" y="68.4" width="1" height="38" fill="#7c7c74"/><rect x="300.5" y="68.4" width="1" height="38" fill="#7c7c74"/><rect x="451" y="68.4" width="1" height="38" fill="#7c7c74"/><rect x="537" y="68.4" width="1" height="38" fill="#7c7c74"/><rect x="570.1" y="68.4" width="1" height="38" fill="#7c7c74"/><rect x="682.1" y="68.4" width="1" height="38" fill="#7c7c74"/><rect x="626.1" y="87.1" width="1" height="19.3" fill="#7c7c74"/><rect x="570.6" y="86.6" width="112.0" height="1" fill="#7c7c74"/></svg>
<span class="t" style="left:183.5px;width:30.0px;top:80.7px;text-align:center;letter-spacing:-0.17px;">Выб</span>
<span class="t" style="left:214.5px;width:86.5px;top:80.7px;text-align:center;">Сокр. наим. товара</span>
<span class="t" style="left:301px;width:137px;top:80.7px;text-align:center;letter-spacing:0.048px;">Название товара (услуги)</span>
<span class="t" style="left:450.5px;width:86.0px;top:80.3px;text-align:center;letter-spacing:0.021px;">Название подтипа</span>
<span class="t" style="left:537.5px;width:33.0px;top:76.2px;text-align:center;letter-spacing:-0.083px;">Ед.</span>
<span class="t" style="left:537.5px;width:33.0px;top:86.5px;text-align:center;letter-spacing:0.35px;">изм.</span>
<span class="t" style="left:570.5px;width:112.0px;top:71px;text-align:center;letter-spacing:0.13px;">Остатки</span>
<span class="t" style="left:570.5px;width:56.0px;top:91px;text-align:center;letter-spacing:-0.137px;">Кол.</span>
<span class="t" style="left:626.5px;width:56.0px;top:91px;text-align:center;letter-spacing:0.033px;">Резерв</span>
<svg style="left:440.8px;top:84.6px" width="6.6" height="5.8" viewBox="0 0 6.6 5.8"><path d="M0.4 0.5 H6.2 L3.3 5.2 Z" fill="#ece9d8" stroke="#a4a49c" stroke-width="0.8"/><path d="M6.2 0.5 L3.3 5.2" stroke="#fff" stroke-width="0.5"/></svg>
<div class="gc" style="top:109.7px"></div>
<div style="left:301px;top:106.4px;width:150px;height:13.6px;overflow:hidden"><span class="t" style="left:1.7px;top:1.5px;letter-spacing:-0.071px;">Арахис жико соленный 40г</span></div>
<div class="dd" style="top:107.9px"></div><svg style="left:529px;top:107.9px" width="8" height="11"><use href="#chv"/></svg>
<span class="t" style="left:540px;top:107.9px;font-weight:bold;font-size:8.2px;letter-spacing:0.7px">шт</span>
<div class="gc" style="top:123.3px"></div>
<div style="left:301px;top:120px;width:150px;height:13.6px;overflow:hidden"><span class="t" style="left:1.7px;top:1.5px;letter-spacing:-0.023px;">Арахис Клинское пиво копчений 30г</span></div>
<div class="dd" style="top:121.5px"></div><svg style="left:529px;top:121.5px" width="8" height="11"><use href="#chv"/></svg>
<span class="t" style="left:540px;top:121.5px;font-weight:bold;font-size:8.2px;letter-spacing:0.7px">шт</span>
<div class="gc" style="top:136.9px"></div>
<div style="left:301px;top:133.6px;width:150px;height:13.6px;overflow:hidden"><span class="t" style="left:1.7px;top:1.5px;letter-spacing:-0.033px;">Арахис Клинское с сыром 30г</span></div>
<div class="dd" style="top:135.1px"></div><svg style="left:529px;top:135.1px" width="8" height="11"><use href="#chv"/></svg>
<span class="t" style="left:540px;top:135.1px;font-weight:bold;font-size:8.2px;letter-spacing:0.7px">шт</span>
<div class="gc" style="top:150.5px"></div>
<div style="left:301px;top:147.2px;width:150px;height:13.6px;overflow:hidden"><span class="t" style="left:1.7px;top:1.5px;letter-spacing:-0.093px;">Батончик Марс 50г</span></div>
<div class="dd" style="top:148.7px"></div><svg style="left:529px;top:148.7px" width="8" height="11"><use href="#chv"/></svg>
<span class="t" style="left:540px;top:148.7px;font-weight:bold;font-size:8.2px;letter-spacing:0.7px">шт</span>
<div class="gc" style="top:164.1px"></div>
<div style="left:301px;top:160.8px;width:150px;height:13.6px;overflow:hidden"><span class="t" style="left:1.7px;top:1.5px;letter-spacing:-0.098px;">Батончик Марс чорн.</span></div>
<div class="dd" style="top:162.3px"></div><svg style="left:529px;top:162.3px" width="8" height="11"><use href="#chv"/></svg>
<span class="t" style="left:540px;top:162.3px;font-weight:bold;font-size:8.2px;letter-spacing:0.7px">шт</span>
<div class="gc" style="top:177.7px"></div>
<div style="left:301px;top:174.4px;width:150px;height:13.6px;overflow:hidden"><span class="t" style="left:1.7px;top:1.5px;">Баунті</span></div>
<div class="dd" style="top:175.9px"></div><svg style="left:529px;top:175.9px" width="8" height="11"><use href="#chv"/></svg>
<span class="t" style="left:540px;top:175.9px;font-weight:bold;font-size:8.2px;letter-spacing:0.7px">шт</span>
<div class="gc" style="top:191.3px"></div>
<div style="left:301px;top:188px;width:150px;height:13.6px;overflow:hidden"><span class="t" style="left:1.7px;top:1.5px;letter-spacing:-0.16px;">Вода мин. неаполис 0,33л</span></div>
<div class="dd" style="top:189.5px"></div><svg style="left:529px;top:189.5px" width="8" height="11"><use href="#chv"/></svg>
<span class="t" style="left:540px;top:189.5px;font-weight:bold;font-size:8.2px;letter-spacing:0.7px">шт</span>
<div class="gc" style="top:204.9px"></div>
<div style="left:301px;top:201.6px;width:150px;height:13.6px;overflow:hidden"><span class="t" style="left:1.7px;top:1.5px;letter-spacing:-0.157px;">Вода мин. Неаполис 0,33л</span></div>
<div class="dd" style="top:203.1px"></div><svg style="left:529px;top:203.1px" width="8" height="11"><use href="#chv"/></svg>
<span class="t" style="left:540px;top:203.1px;font-weight:bold;font-size:8.2px;letter-spacing:0.7px">шт</span>
<div class="gc" style="top:218.5px"></div>
<svg style="left:195.5px;top:219px" width="6.8" height="7" viewBox="0 0 9 9"><use href="#ck"/></svg>
<div style="left:301px;top:215.2px;width:150px;height:13.6px;overflow:hidden"><span class="t" style="left:1.7px;top:1.5px;letter-spacing:-0.166px;">Вода мин. Перье 0,33</span></div>
<div class="dd" style="top:216.7px"></div><svg style="left:529px;top:216.7px" width="8" height="11"><use href="#chv"/></svg>
<span class="t" style="left:540px;top:216.7px;font-weight:bold;font-size:8.2px;letter-spacing:0.7px">шт</span>
<div class="gc" style="top:232.1px"></div>
<div style="left:301px;top:228.8px;width:150px;height:13.6px;overflow:hidden"><span class="t" style="left:1.7px;top:1.5px;letter-spacing:-0.192px;">Вода мин. Перье лимон  0,33</span></div>
<div class="dd" style="top:230.3px"></div><svg style="left:529px;top:230.3px" width="8" height="11"><use href="#chv"/></svg>
<span class="t" style="left:540px;top:230.3px;font-weight:bold;font-size:8.2px;letter-spacing:0.7px">шт</span>
<div class="gc" style="top:245.7px"></div>
<div style="left:301px;top:242.4px;width:150px;height:13.6px;overflow:hidden"><span class="t" style="left:1.7px;top:1.5px;letter-spacing:-0.19px;">Вода мин. Christinen 0,33л</span></div>
<div class="dd" style="top:243.9px"></div><svg style="left:529px;top:243.9px" width="8" height="11"><use href="#chv"/></svg>
<span class="t" style="left:540px;top:243.9px;font-weight:bold;font-size:8.2px;letter-spacing:0.7px">шт</span>
<div class="gc" style="top:259.3px"></div>
<div style="left:301px;top:256px;width:150px;height:13.6px;overflow:hidden"><span class="t" style="left:1.7px;top:1.5px;letter-spacing:-0.194px;">Вода мин.Christinen 0,33л</span></div>
<div class="dd" style="top:257.5px"></div><svg style="left:529px;top:257.5px" width="8" height="11"><use href="#chv"/></svg>
<span class="t" style="left:540px;top:257.5px;font-weight:bold;font-size:8.2px;letter-spacing:0.7px">шт</span>
<div class="gc" style="top:272.9px"></div>
<div style="left:301px;top:269.6px;width:150px;height:13.6px;overflow:hidden"><span class="t" style="left:1.7px;top:1.5px;letter-spacing:-0.262px;">Вода Перье 0,34</span></div>
<div class="dd" style="top:271.1px"></div><svg style="left:529px;top:271.1px" width="8" height="11"><use href="#chv"/></svg>
<span class="t" style="left:540px;top:271.1px;font-weight:bold;font-size:8.2px;letter-spacing:0.7px">шт</span>
<div class="gc" style="top:286.5px"></div>
<div style="left:301px;top:283.2px;width:150px;height:13.6px;overflow:hidden"><span class="t" style="left:1.7px;top:1.5px;">Драже  Свиточ изюм в какао 80г</span></div>
<div class="dd" style="top:284.7px"></div><svg style="left:529px;top:284.7px" width="8" height="11"><use href="#chv"/></svg>
<span class="t" style="left:540px;top:284.7px;font-weight:bold;font-size:8.2px;letter-spacing:0.7px">шт</span>
<div class="gc" style="top:300.1px"></div>
<div style="left:301px;top:296.8px;width:150px;height:13.6px;overflow:hidden"><span class="t" style="left:1.7px;top:1.5px;">Драже Свиточ арахис в молочном шоколаде</span></div>
<div class="dd" style="top:298.3px"></div><svg style="left:529px;top:298.3px" width="8" height="11"><use href="#chv"/></svg>
<span class="t" style="left:540px;top:298.3px;font-weight:bold;font-size:8.2px;letter-spacing:0.7px">шт</span>
<div class="gc" style="top:313.7px"></div>
<div style="left:301px;top:310.4px;width:150px;height:13.6px;overflow:hidden"><span class="t" style="left:1.7px;top:1.5px;">Драже Свиточ арахіс в молочному</span></div>
<div class="dd" style="top:311.9px"></div><svg style="left:529px;top:311.9px" width="8" height="11"><use href="#chv"/></svg>
<span class="t" style="left:540px;top:311.9px;font-weight:bold;font-size:8.2px;letter-spacing:0.7px">шт</span>
<div class="gc" style="top:327.3px"></div>
<svg style="left:195.5px;top:327.8px" width="6.8" height="7" viewBox="0 0 9 9"><use href="#ck"/></svg>
<div style="left:301px;top:324px;width:150px;height:13.6px;overflow:hidden"><span class="t" style="left:1.7px;top:1.5px;">Драже Свиточ изюм в какао 80г</span></div>
<div class="dd" style="top:325.5px"></div><svg style="left:529px;top:325.5px" width="8" height="11"><use href="#chv"/></svg>
<span class="t" style="left:540px;top:325.5px;font-weight:bold;font-size:8.2px;letter-spacing:0.7px">шт</span>
<div class="gc" style="top:340.9px"></div>
<div style="left:301px;top:337.6px;width:150px;height:13.6px;overflow:hidden"><span class="t" style="left:1.7px;top:1.5px;letter-spacing:0.067px;">Изюм Жасмин 200</span></div>
<div class="dd" style="top:339.1px"></div><svg style="left:529px;top:339.1px" width="8" height="11"><use href="#chv"/></svg>
<span class="t" style="left:540px;top:339.1px;font-weight:bold;font-size:8.2px;letter-spacing:0.7px">шт</span>
<div class="gc" style="top:354.5px"></div>
<div style="left:301px;top:351.2px;width:150px;height:13.6px;overflow:hidden"><span class="t" style="left:1.7px;top:1.5px;letter-spacing:0.071px;">Изюм Жасмин 200г х30</span></div>
<div class="dd" style="top:352.7px"></div><svg style="left:529px;top:352.7px" width="8" height="11"><use href="#chv"/></svg>
<span class="t" style="left:540px;top:352.7px;font-weight:bold;font-size:8.2px;letter-spacing:0.7px">шт</span>
<div class="gc" style="top:368.1px"></div>
<div style="left:301px;top:364.8px;width:150px;height:13.6px;overflow:hidden"><span class="t" style="left:1.7px;top:1.5px;letter-spacing:0.071px;">Изюм Жасмин 300г х30</span></div>
<div class="dd" style="top:366.3px"></div><svg style="left:529px;top:366.3px" width="8" height="11"><use href="#chv"/></svg>
<span class="t" style="left:540px;top:366.3px;font-weight:bold;font-size:8.2px;letter-spacing:0.7px">шт</span>
<div class="gc" style="top:381.7px"></div>
<div style="left:301px;top:378.4px;width:150px;height:13.6px;overflow:hidden"><span class="t" style="left:1.7px;top:1.5px;letter-spacing:-0.096px;">кальмари дальпико-рибсервіс сушені</span></div>
<div class="dd" style="top:379.9px"></div><svg style="left:529px;top:379.9px" width="8" height="11"><use href="#chv"/></svg>
<span class="t" style="left:540px;top:379.9px;font-weight:bold;font-size:8.2px;letter-spacing:0.7px">шт</span>
<div class="gc" style="top:395.3px"></div>
<div style="left:301px;top:392px;width:150px;height:13.6px;overflow:hidden"><span class="t" style="left:1.7px;top:1.5px;letter-spacing:-0.047px;">Кальмары Дальпико -рыбсервис 10</span></div>
<div class="dd" style="top:393.5px"></div><svg style="left:529px;top:393.5px" width="8" height="11"><use href="#chv"/></svg>
<span class="t" style="left:540px;top:393.5px;font-weight:bold;font-size:8.2px;letter-spacing:0.7px">шт</span>
<div class="gc" style="top:408.9px"></div>
<svg style="left:195.5px;top:409.4px" width="6.8" height="7" viewBox="0 0 9 9"><use href="#ck"/></svg>
<div style="left:301px;top:405.6px;width:150px;height:13.6px;overflow:hidden"><span class="t" style="left:1.7px;top:1.5px;letter-spacing:-0.124px;">Кофе Якобс Монарх молотий 75г</span></div>
<div class="dd" style="top:407.1px"></div><svg style="left:529px;top:407.1px" width="8" height="11"><use href="#chv"/></svg>
<span class="t" style="left:540px;top:407.1px;font-weight:bold;font-size:8.2px;letter-spacing:0.7px">шт</span>
<div class="gc" style="top:422.5px"></div>
<div style="left:301px;top:419.2px;width:150px;height:13.6px;overflow:hidden"><span class="t" style="left:1.7px;top:1.5px;letter-spacing:-0.118px;">Кофе Якобс Монарх молотый 75г</span></div>
<div class="dd" style="top:420.7px"></div><svg style="left:529px;top:420.7px" width="8" height="11"><use href="#chv"/></svg>
<span class="t" style="left:540px;top:420.7px;font-weight:bold;font-size:8.2px;letter-spacing:0.7px">шт</span>
<svg style="left:177.5px;top:408.4px" width="5.5" height="8" viewBox="0 0 5.5 8"><path d="M0 0 L5.5 4 L0 8Z" fill="#000"/></svg>
<div style="left:841.4px;top:68.4px;width:14.4px;height:376.6px;background:linear-gradient(90deg,#f2f0ea,#fdfdfa 70%)"></div>
<div style="left:842.9px;top:69.7px;width:10.4px;height:10.4px;background:linear-gradient(135deg,#cad8fd,#b9cbf8);border-radius:1px;box-shadow:1.1px 1.1px 0.6px #d4dff9,-0.5px -0.5px 0.5px #e8eefc"></div>
<svg style="left:842.9px;top:69.7px" width="10.4" height="10.4" viewBox="0 0 10.4 10.4"><path d="M2 6.8 L5.2 3.7 L8.4 6.8" fill="none" stroke="#445474" stroke-width="1.7"/></svg>
<div style="left:842.8px;top:188px;width:11.9px;height:114px;background:linear-gradient(90deg,#cbd8fd 0,#bccef9 80%,#eef3ff 86%,#eef3ff 92%,#a9bbe6 100%);border-radius:1.5px;box-shadow:0 0 0.8px 0.3px #e6ecfc"></div>
<div style="left:845.95px;top:242px;width:4.8px;height:0.8px;background:#eef4fe;box-shadow:0 0.6px 0 #9fb4e6"></div>
<div style="left:845.95px;top:243.7px;width:4.8px;height:0.8px;background:#eef4fe;box-shadow:0 0.6px 0 #9fb4e6"></div>
<div style="left:845.95px;top:245.4px;width:4.8px;height:0.8px;background:#eef4fe;box-shadow:0 0.6px 0 #9fb4e6"></div>
<div style="left:845.95px;top:247.1px;width:4.8px;height:0.8px;background:#eef4fe;box-shadow:0 0.6px 0 #9fb4e6"></div>
<div style="left:842.9px;top:432.2px;width:10.4px;height:10.4px;background:linear-gradient(135deg,#cad8fd,#b9cbf8);border-radius:1px;box-shadow:1.1px 1.1px 0.6px #d4dff9,-0.5px -0.5px 0.5px #e8eefc"></div>
<svg style="left:842.9px;top:432.2px" width="10.4" height="10.4" viewBox="0 0 10.4 10.4"><path d="M2 3.9 L5.2 7 L8.4 3.9" fill="none" stroke="#445474" stroke-width="1.7"/></svg>
<svg style="left:201.4px;top:412.3px" width="10.5" height="18.9" viewBox="0 0 10 18"><path d="M0.5 0.5 V13.5 L3.4 10.8 L5.6 16.4 L7.8 15.4 L5.6 10.2 H9.6 Z" fill="#fff" stroke="#000" stroke-width="0.9"/></svg>
<div style="left:4px;top:446px;width:855px;height:1px;background:#fff"></div>
<div class="btn" style="left:14px;width:62.5px"></div>
<svg style="left:19.5px;top:457.5px" width="12" height="11" viewBox="0 0 12 11"><path d="M0.8 6 L2.8 4.2 L4.6 6.2 L9.6 0.6 L11.4 2.2 L4.8 10.4 Z" fill="#14b814" stroke="#083808" stroke-width="0.9"/></svg>
<span class="t" style="left:33.7px;top:457.6px;letter-spacing:0.122px;">Выбрать</span>
<div class="btn" style="left:81px;width:62.5px"></div>
<svg style="left:90.5px;top:458px" width="10" height="10" viewBox="0 0 10 10"><path d="M1 0.6 L5 3.6 L8.6 0.4 L9.6 1.4 L6.4 5 L9.4 8.8 L8.2 9.6 L5 6.4 L1.6 9.6 L0.4 8.6 L3.6 5 L0.4 1.6 Z" fill="#c00c0c" stroke="#500" stroke-width="0.9"/></svg>
<span class="t" style="left:104.4px;top:457.6px;letter-spacing:0.021px;">Отмена</span>
<div style="left:190.2px;top:450px;width:1px;height:25px;background:#c5c2b2"></div><div style="left:191.2px;top:450px;width:1px;height:25px;background:#fff"></div>
<div style="left:407.3px;top:450px;width:1px;height:25px;background:#c5c2b2"></div><div style="left:408.3px;top:450px;width:1px;height:25px;background:#fff"></div>
<span class="t" style="left:200px;top:457.3px;letter-spacing:0.083px;">Документация</span>
<span class="t" style="left:277.5px;top:457.3px;letter-spacing:-0.109px;">Подробное описание товара</span>
<span class="t" style="left:421.5px;top:457.3px;letter-spacing:-0.055px;">Объединить</span>
<span class="t" style="left:491.5px;top:457.3px;letter-spacing:-0.033px;">Объединить по названию</span>
<span class="t" style="left:616px;top:457.3px;letter-spacing:0.067px;">Корректировка</span>
</body></html>
